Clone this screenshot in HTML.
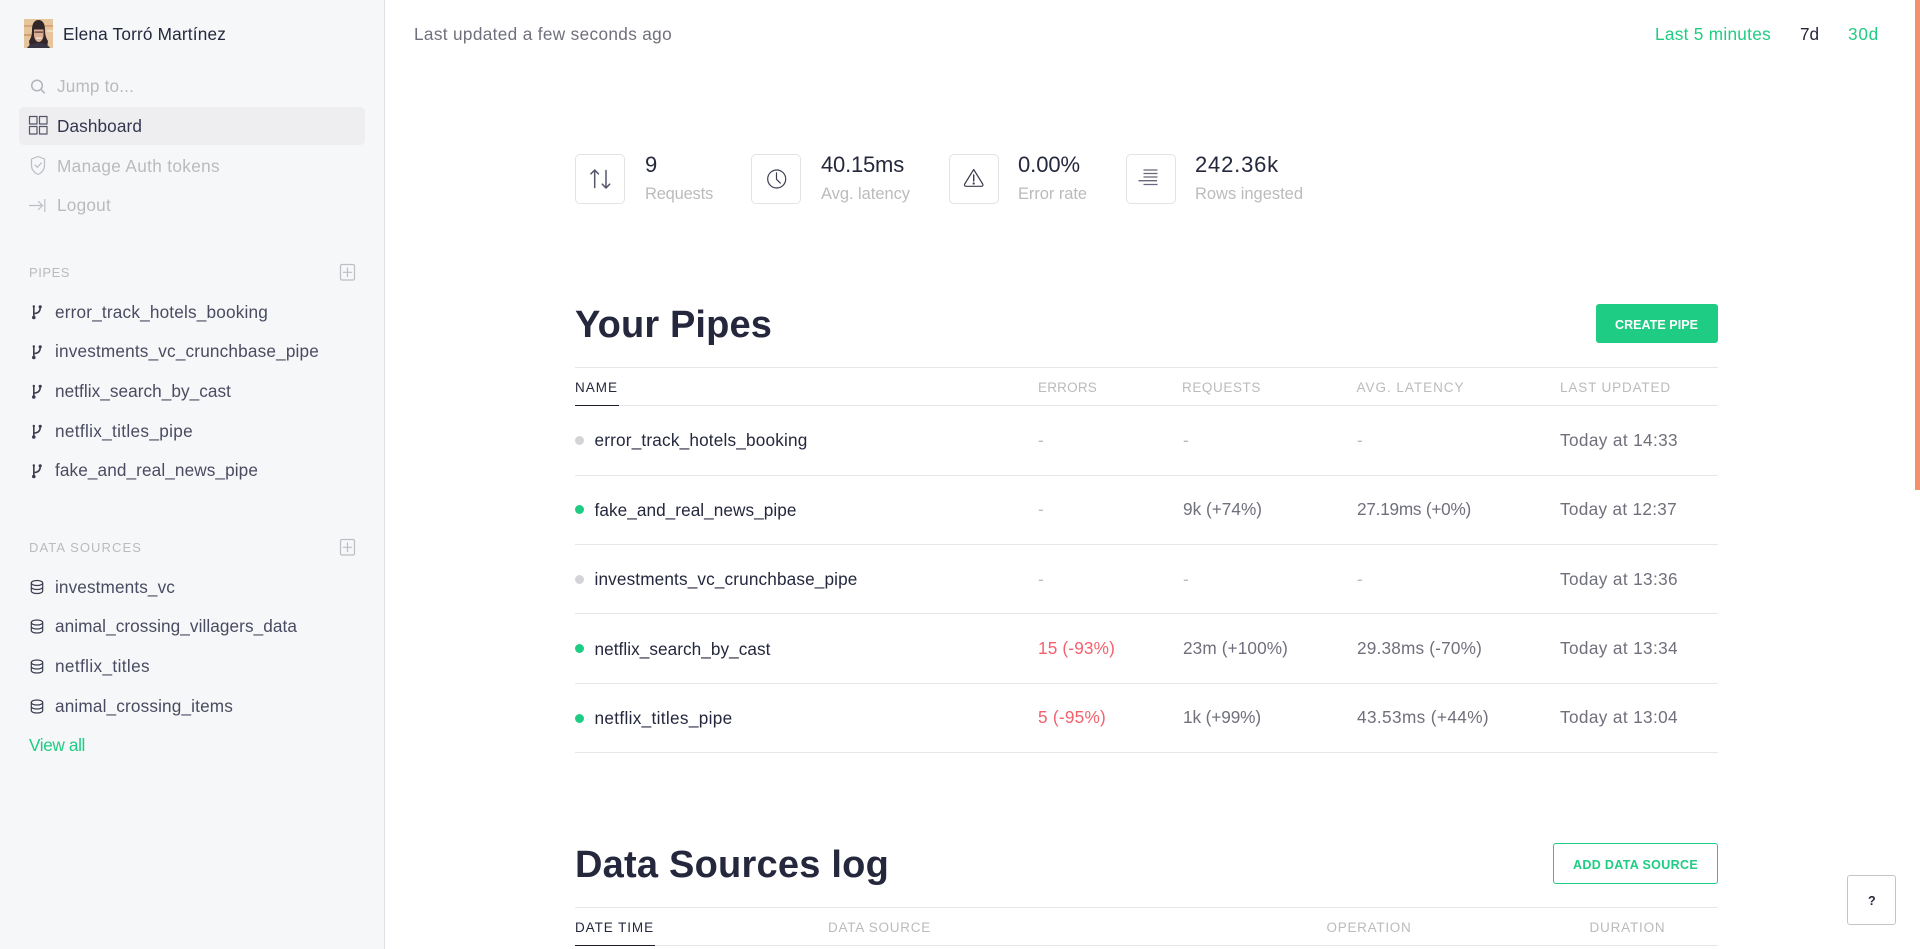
<!DOCTYPE html>
<html lang="en"><head><meta charset="utf-8"><title>Dashboard</title>
<style>
html,body{margin:0;width:1920px;height:949px;overflow:hidden;background:#fff}
body{position:relative;font-family:"Liberation Sans",Arial,sans-serif;color:#25283d;font-size:17.2px}
.t{position:absolute;white-space:nowrap;line-height:20px;letter-spacing:0}
.b{position:absolute;box-sizing:border-box}
.side{left:0;top:0;width:385px;height:949px;background:#f6f7f9;border-right:1px solid #dfdfe5}
.g{color:#bbb}.i{color:#4a4b60}.v{color:#6f707c}.gr{color:#1fcc83}.r{color:#f4606c}.n{color:#25283d}
.h{font-size:13.5px;line-height:16px;letter-spacing:1.3px;color:#bbb}
.sec{font-size:13px;letter-spacing:1.3px;color:#bbb}
.val{font-size:22px;line-height:24px}
.lab{font-size:16.5px;color:#bbb}
.ttl{font-size:38px;line-height:44px;font-weight:700;letter-spacing:0}
.line{left:575px;width:1143px;height:1px;background:#e6e6e6}
.box{width:50px;height:50px;top:154px;border:1px solid #e3e3e7;border-radius:5px;background:#fff}
.dot{left:575px;width:9px;height:9px;border-radius:50%}
.btn{font-size:12.5px;line-height:16px;font-weight:700;letter-spacing:0}
svg{position:absolute;overflow:visible}
</style></head><body>

<div class="b side"></div>
<svg style="left:24px;top:19px" width="29" height="29" viewBox="0 0 29 29">
<rect width="29" height="29" fill="#e6c59c"/><rect y="6" width="29" height="2" fill="#d6a77c"/><rect y="15" width="7" height="2" fill="#cf9f78"/><rect x="23" y="11" width="6" height="2" fill="#f0dcc0"/>
<path d="M14.500 1C10 1 8 5 8 11c0 5-1 8-3 11l1 7h17l1-7c-2-3-3-6-3-11 0-6-2-10-6.500-10z" fill="#33262a"/>
<path d="M10 9h9.500v7c0 4-2.500 7-4.750 7S10 20 10 16z" fill="#dcae92"/><path d="M9.500 6h10.500v4.500H9.500z" fill="#33262a"/>
<rect x="10.500" y="12.500" width="8.500" height="1.200" fill="#4a3634"/><rect x="12" y="18.500" width="5.500" height="1.200" fill="#f6eae2"/>
<path d="M3 29c2-3.500 7-5 11.500-5S24 25.500 26 29z" fill="#3a3542"/></svg>
<span class="t n" w="163" style="left:63px;top:24px">Elena Torró Martínez</span>

<div class="b" style="left:19px;top:107px;width:346px;height:38px;background:#eeeef0;border-radius:5px"></div>
<svg style="left:0;top:0" width="385" height="949" fill="none" stroke-linejoin="round" stroke-linecap="round">
<circle cx="37" cy="85.500" r="5.300" stroke="#b3b3b9" stroke-width="1.500"/><path d="M41 89.500l3.300 3.300" stroke="#b3b3b9" stroke-width="1.500"/>
<g stroke="#55566a" stroke-width="1.200"><rect x="29.500" y="116.500" width="7.500" height="7.500"/><rect x="39.500" y="116.500" width="7.500" height="7.500"/><rect x="29.500" y="126.500" width="7.500" height="7.500"/><rect x="39.500" y="126.500" width="7.500" height="7.500"/></g>
<path d="M38 156.500l6.500 2.500v6.500c0 4.200-3 7.500-6.500 9-3.500-1.500-6.500-4.800-6.500-9V159z" stroke="#bcbcc2" stroke-width="1.200"/><path d="M35 165l2.300 2.300 4-4.300" stroke="#bcbcc2" stroke-width="1.200"/>
<path d="M29.500 205.500h13M38.500 201.500l4 4-4 4" stroke="#bcbcc2" stroke-width="1.200"/><path d="M44.800 199.500v12" stroke="#bcbcc2" stroke-width="1.200"/>
<g stroke="#bdbdc3" stroke-width="1.200"><rect x="340.500" y="264.500" width="14" height="15.500" rx="1.500"/><path d="M347.500 268v8.500M343.300 272.300h8.400"/><rect x="340.500" y="539.500" width="14" height="15.500" rx="1.500"/><path d="M347.500 543v8.500M343.300 547.300h8.400"/></g>
</svg>
<span class="t g" w="77" style="left:57px;top:75.500px">Jump to...</span>
<span class="t n" w="85" style="left:57px;top:116px;color:#343650">Dashboard</span>
<span class="t g" w="163" style="left:57px;top:155.500px">Manage Auth tokens</span>
<span class="t g" w="54" style="left:57px;top:195px">Logout</span>

<span class="t sec" w="41" style="left:29px;top:262.800px">PIPES</span>
<svg style="left:0;top:0" width="385" height="949" fill="none">
<g stroke="#3c3d50" stroke-width="1.600" stroke-linecap="butt">
<g><path d="M33.800 306.500v11M33.800 313.500c4 0 6.400-1.500 6.400-6"/><circle cx="33.800" cy="317.500" r="1.800" fill="#3c3d50" stroke="none"/><circle cx="33.800" cy="306.500" r="1.200" fill="#3c3d50" stroke="none"/><circle cx="40.200" cy="306.800" r="1.600" fill="#3c3d50" stroke="none"/></g>
<g transform="translate(0,40)"><path d="M33.800 306.500v11M33.800 313.500c4 0 6.400-1.500 6.400-6"/><circle cx="33.800" cy="317.500" r="1.800" fill="#3c3d50" stroke="none"/><circle cx="33.800" cy="306.500" r="1.200" fill="#3c3d50" stroke="none"/><circle cx="40.200" cy="306.800" r="1.600" fill="#3c3d50" stroke="none"/></g>
<g transform="translate(0,79.500)"><path d="M33.800 306.500v11M33.800 313.500c4 0 6.400-1.500 6.400-6"/><circle cx="33.800" cy="317.500" r="1.800" fill="#3c3d50" stroke="none"/><circle cx="33.800" cy="306.500" r="1.200" fill="#3c3d50" stroke="none"/><circle cx="40.200" cy="306.800" r="1.600" fill="#3c3d50" stroke="none"/></g>
<g transform="translate(0,119.500)"><path d="M33.800 306.500v11M33.800 313.500c4 0 6.400-1.500 6.400-6"/><circle cx="33.800" cy="317.500" r="1.800" fill="#3c3d50" stroke="none"/><circle cx="33.800" cy="306.500" r="1.200" fill="#3c3d50" stroke="none"/><circle cx="40.200" cy="306.800" r="1.600" fill="#3c3d50" stroke="none"/></g>
<g transform="translate(0,159)"><path d="M33.800 306.500v11M33.800 313.500c4 0 6.400-1.500 6.400-6"/><circle cx="33.800" cy="317.500" r="1.800" fill="#3c3d50" stroke="none"/><circle cx="33.800" cy="306.500" r="1.200" fill="#3c3d50" stroke="none"/><circle cx="40.200" cy="306.800" r="1.600" fill="#3c3d50" stroke="none"/></g>
</g>
<g stroke="#3c3d50" stroke-width="1.200">
<g transform="translate(0,-0.500)"><ellipse cx="37" cy="583.500" rx="5.700" ry="2.500"/><path d="M31.300 583.500v8c0 1.400 2.500 2.500 5.700 2.500s5.700-1.100 5.700-2.500v-8M31.300 587.500c0 1.400 2.500 2.500 5.700 2.500s5.700-1.100 5.700-2.500"/></g>
<g transform="translate(0,39)"><ellipse cx="37" cy="583.500" rx="5.700" ry="2.500"/><path d="M31.300 583.500v8c0 1.400 2.500 2.500 5.700 2.500s5.700-1.100 5.700-2.500v-8M31.300 587.500c0 1.400 2.500 2.500 5.700 2.500s5.700-1.100 5.700-2.500"/></g>
<g transform="translate(0,79)"><ellipse cx="37" cy="583.500" rx="5.700" ry="2.500"/><path d="M31.300 583.500v8c0 1.400 2.500 2.500 5.700 2.500s5.700-1.100 5.700-2.500v-8M31.300 587.500c0 1.400 2.500 2.500 5.700 2.500s5.700-1.100 5.700-2.500"/></g>
<g transform="translate(0,119)"><ellipse cx="37" cy="583.500" rx="5.700" ry="2.500"/><path d="M31.300 583.500v8c0 1.400 2.500 2.500 5.700 2.500s5.700-1.100 5.700-2.500v-8M31.300 587.500c0 1.400 2.500 2.500 5.700 2.500s5.700-1.100 5.700-2.500"/></g>
</g></svg>
<span class="t i" w="213" style="left:55px;top:302px">error_track_hotels_booking</span>
<span class="t i" w="264" style="left:55px;top:341px">investments_vc_crunchbase_pipe</span>
<span class="t i" w="176" style="left:55px;top:381px">netflix_search_by_cast</span>
<span class="t i" w="138" style="left:55px;top:421px">netflix_titles_pipe</span>
<span class="t i" w="203" style="left:55px;top:460px">fake_and_real_news_pipe</span>

<span class="t sec" w="113" style="left:29px;top:538px">DATA SOURCES</span>
<span class="t i" w="120" style="left:55px;top:577px">investments_vc</span>
<span class="t i" w="242" style="left:55px;top:616px">animal_crossing_villagers_data</span>
<span class="t i" w="95" style="left:55px;top:656px">netflix_titles</span>
<span class="t i" w="178" style="left:55px;top:696px">animal_crossing_items</span>
<span class="t gr" w="56" style="left:29px;top:735px">View all</span>

<span class="t v" w="258" style="left:414px;top:24px">Last updated a few seconds ago</span>
<span class="t gr" w="116" style="left:1655px;top:24px">Last 5 minutes</span>
<span class="t n" w="19" style="left:1800px;top:24px">7d</span>
<span class="t gr" w="31" style="left:1848px;top:24px">30d</span>
<div class="b" style="left:1915px;top:0;width:5px;height:490px;background:#f4916c"></div>

<div class="b box" style="left:575px"></div><div class="b box" style="left:751px"></div><div class="b box" style="left:949px"></div><div class="b box" style="left:1126px"></div>
<svg style="left:0;top:0" width="1400" height="300" fill="none" stroke-linecap="round" stroke-linejoin="round">
<path d="M594.700 187.500v-17M591 173.800l3.700-3.800 3.700 3.800M606 170.500v17M602.300 184.200l3.700 3.800 3.700-3.800" stroke="#55566a" stroke-width="1.500"/>
<circle cx="776.700" cy="179" r="9" stroke="#3c3d50" stroke-width="1.200"/><path d="M776.500 172.800v6.500l3.800 3.800" stroke="#3c3d50" stroke-width="1.200"/>
<path d="M973.700 169.500l9 14.500c.7 1.200 0 2.300-1.200 2.300h-15.600c-1.200 0-1.900-1.100-1.200-2.300z" stroke="#3c3d50" stroke-width="1.200"/><path d="M973.700 175v6" stroke="#3c3d50" stroke-width="1.400"/><circle cx="973.700" cy="183.500" r=".6" fill="#3c3d50" stroke="#3c3d50"/>
<path d="M1143.500 170h14M1143.500 173.500h14M1143.500 177h14M1138.500 180.700h18.500M1143.500 184.500h14" stroke="#66677a" stroke-width="1.300" stroke-linecap="butt"/>
</svg>
<span class="t val" w="14" style="left:645px;top:153px">9</span><span class="t lab" w="68" style="left:645px;top:184px">Requests</span>
<span class="t val" w="83" style="left:821px;top:153px">40.15ms</span><span class="t lab" w="89" style="left:821px;top:184px">Avg. latency</span>
<span class="t val" w="62" style="left:1018px;top:153px">0.00%</span><span class="t lab" w="69" style="left:1018px;top:184px">Error rate</span>
<span class="t val" w="84" style="left:1195px;top:153px">242.36k</span><span class="t lab" w="108" style="left:1195px;top:184px">Rows ingested</span>

<span class="t ttl" w="197" style="left:575px;top:302.500px">Your Pipes</span>
<div class="b" style="left:1596px;top:304px;width:122px;height:39px;background:#1fcc83;border-radius:3px"></div>
<span class="t btn" w="83" style="left:1615px;top:317px;color:#fff">CREATE PIPE</span>

<div class="b line" style="top:367px"></div><div class="b line" style="top:405px"></div>
<div class="b" style="left:575px;top:404.500px;width:44px;height:1.500px;background:#1d1d2b"></div>
<span class="t h" w="43" style="left:575px;top:379.500px;color:#25283d">NAME</span>
<span class="t h" w="59" style="left:1038px;top:379.500px">ERRORS</span>
<span class="t h" w="79" style="left:1182px;top:379.500px">REQUESTS</span>
<span class="t h" w="108" style="left:1356.500px;top:379.500px">AVG. LATENCY</span>
<span class="t h" w="111" style="left:1560px;top:379.500px">LAST UPDATED</span>

<div class="b dot" style="top:436px;background:#d4d4d8"></div>
<span class="t n" w="213" style="left:594.500px;top:430px">error_track_hotels_booking</span>
<span class="t g" style="left:1038px;top:430px">-</span><span class="t g" style="left:1183px;top:430px">-</span><span class="t g" style="left:1357px;top:430px">-</span>
<span class="t v" w="118" style="left:1560px;top:430px">Today at 14:33</span>
<div class="b line" style="top:475px"></div>

<div class="b dot" style="top:505px;background:#1fcc83"></div>
<span class="t n" w="202" style="left:594.500px;top:500px">fake_and_real_news_pipe</span>
<span class="t g" style="left:1038px;top:499px">-</span>
<span class="t v" w="79" style="left:1183px;top:499px">9k (+74%)</span>
<span class="t v" w="114" style="left:1357px;top:499px">27.19ms (+0%)</span>
<span class="t v" w="117" style="left:1560px;top:499px">Today at 12:37</span>
<div class="b line" style="top:544px"></div>

<div class="b dot" style="top:575px;background:#d4d4d8"></div>
<span class="t n" w="263" style="left:594.500px;top:569px">investments_vc_crunchbase_pipe</span>
<span class="t g" style="left:1038px;top:569px">-</span><span class="t g" style="left:1183px;top:569px">-</span><span class="t g" style="left:1357px;top:569px">-</span>
<span class="t v" w="118" style="left:1560px;top:569px">Today at 13:36</span>
<div class="b line" style="top:613px"></div>

<div class="b dot" style="top:644px;background:#1fcc83"></div>
<span class="t n" w="176" style="left:594.500px;top:639px">netflix_search_by_cast</span>
<span class="t r" w="77" style="left:1038px;top:638px">15 (-93%)</span>
<span class="t v" w="105" style="left:1183px;top:638px">23m (+100%)</span>
<span class="t v" w="125" style="left:1357px;top:638px">29.38ms (-70%)</span>
<span class="t v" w="118" style="left:1560px;top:638px">Today at 13:34</span>
<div class="b line" style="top:683px"></div>

<div class="b dot" style="top:714px;background:#1fcc83"></div>
<span class="t n" w="138" style="left:594.500px;top:708px">netflix_titles_pipe</span>
<span class="t r" w="68" style="left:1038px;top:707px">5 (-95%)</span>
<span class="t v" w="78" style="left:1183px;top:707px">1k (+99%)</span>
<span class="t v" w="132" style="left:1357px;top:707px">43.53ms (+44%)</span>
<span class="t v" w="118" style="left:1560px;top:707px">Today at 13:04</span>
<div class="b line" style="top:752px"></div>

<span class="t ttl" w="314" style="left:575px;top:842.500px">Data Sources log</span>
<div class="b" style="left:1553px;top:843px;width:165px;height:41px;border:1px solid #1fcc83;border-radius:3px;background:#fff"></div>
<span class="t btn gr" w="125" style="left:1573px;top:857px">ADD DATA SOURCE</span>
<div class="b line" style="top:907px"></div><div class="b line" style="top:945px"></div>
<div class="b" style="left:575px;top:944.500px;width:80px;height:1.500px;background:#1d1d2b"></div>
<span class="t h" w="79" style="left:575px;top:919.800px;color:#25283d">DATE TIME</span>
<span class="t h" w="103" style="left:828px;top:919.800px">DATA SOURCE</span>
<span class="t h" w="85" style="left:1326.500px;top:919.800px">OPERATION</span>
<span class="t h" w="76" style="left:1589.500px;top:919.800px">DURATION</span>
<div class="b" style="left:1847px;top:875px;width:49px;height:50px;border:1px solid #c4c4ca;border-radius:3px;background:#fff"></div>
<span class="t btn n" style="left:1868px;top:893px">?</span>

<script>
document.querySelectorAll('.t[w]').forEach(function(e){
  var cs=parseFloat(getComputedStyle(e).letterSpacing)||0,n=e.textContent.length;
  var cur=e.getBoundingClientRect().width,tgt=parseFloat(e.getAttribute('w'));
  e.style.letterSpacing=(cs+(tgt-cur)/n)+'px';
});
</script>
</body></html>
